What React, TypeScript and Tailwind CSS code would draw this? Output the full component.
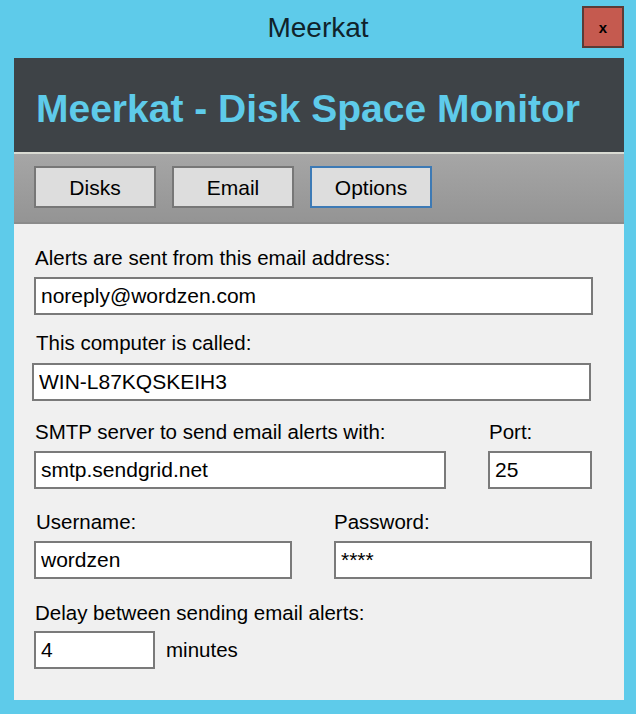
import React from 'react';

const FONT = "font-['Liberation_Sans',Arial,sans-serif]";

interface FieldProps {
  value: string;
  className?: string;
}

const Field: React.FC<FieldProps> = ({ value, className = '' }) => (
  <input
    readOnly
    value={value}
    className={`h-[38px] border-2 border-[#7a7a7a] bg-white pl-[5px] text-[21px] text-black outline-none ${className}`}
  />
);

const Label: React.FC<{ children: React.ReactNode; className?: string }> = ({ children, className = '' }) => (
  <div className={`text-[20.5px] leading-[24px] text-black whitespace-nowrap ${className}`}>{children}</div>
);

const TabButton: React.FC<{ label: string; active?: boolean }> = ({ label, active }) => (
  <button
    className={`w-[122px] h-[42px] border-2 bg-[#dddddd] text-[21px] leading-none text-black ${
      active ? 'border-[#3d7ab5]' : 'border-[#777777]'
    }`}
  >
    {label}
  </button>
);

export default function App() {
  return (
    <div className={`w-[636px] h-[714px] bg-[#5ecbea] flex flex-col ${FONT}`}>
      {/* title bar */}
      <div className="h-[58px] grid grid-cols-[1fr_auto_1fr]">
        <div />
        <div className="pt-[14px] text-[28px] leading-none text-[#10232b]">Meerkat</div>
        <div className="flex justify-end items-start pr-[12px] pt-[6px]">
          <button className="w-[42px] h-[42px] bg-[#c55a4f] border-2 border-[#5b3b36] flex items-center justify-center text-[15px] font-bold leading-none text-black">
            x
          </button>
        </div>
      </div>

      <div className="ml-[14px] mr-[12px] mb-[14px] flex-1 flex flex-col bg-[#f0f0f0]">
        {/* header */}
        <div className="h-[94px] bg-[#3e4347] pl-[22px] pt-[31px]">
          <div className="text-[39px] font-bold leading-none text-[#5ecbea] whitespace-nowrap">
            Meerkat - Disk Space Monitor
          </div>
        </div>

        {/* toolbar */}
        <div className="border-t-2 border-[#d9dbd3]">
          <div className="h-[70px] bg-gradient-to-b from-[#a6a6a6] to-[#949494] flex items-start gap-[16px] pl-[20px] pt-[12px] border-b-2 border-[#8b8b8b]">
            <TabButton label="Disks" />
            <TabButton label="Email" />
            <TabButton label="Options" active />
          </div>
        </div>

        {/* form */}
        <div className="flex flex-col pl-[20px] pt-[22px]">
          <Label className="ml-[1px]">Alerts are sent from this email address:</Label>
          <Field value="noreply@wordzen.com" className="mt-[7px] w-[559px]" />

          <Label className="mt-[16px] ml-[2px]">This computer is called:</Label>
          <Field value="WIN-L87KQSKEIH3" className="mt-[8px] -ml-[2px] w-[559px]" />

          <div className="mt-[19px] flex">
            <Label className="w-[454px] ml-[1px]">SMTP server to send email alerts with:</Label>
            <Label>Port:</Label>
          </div>
          <div className="mt-[7px] flex gap-[42px]">
            <Field value="smtp.sendgrid.net" className="w-[412px]" />
            <Field value="25" className="w-[104px]" />
          </div>

          <div className="mt-[21px] flex">
            <Label className="w-[300px] pl-[2px]">Username:</Label>
            <Label>Password:</Label>
          </div>
          <div className="mt-[7px] flex gap-[42px]">
            <Field value="wordzen" className="w-[258px]" />
            <Field value="****" className="w-[258px]" />
          </div>

          <Label className="mt-[22px] ml-[1px]">Delay between sending email alerts:</Label>
          <div className="mt-[6px] flex items-center">
            <Field value="4" className="w-[121px]" />
            <span className="ml-[11px] text-[20.5px] text-black">minutes</span>
          </div>
        </div>
      </div>
    </div>
  );
}
